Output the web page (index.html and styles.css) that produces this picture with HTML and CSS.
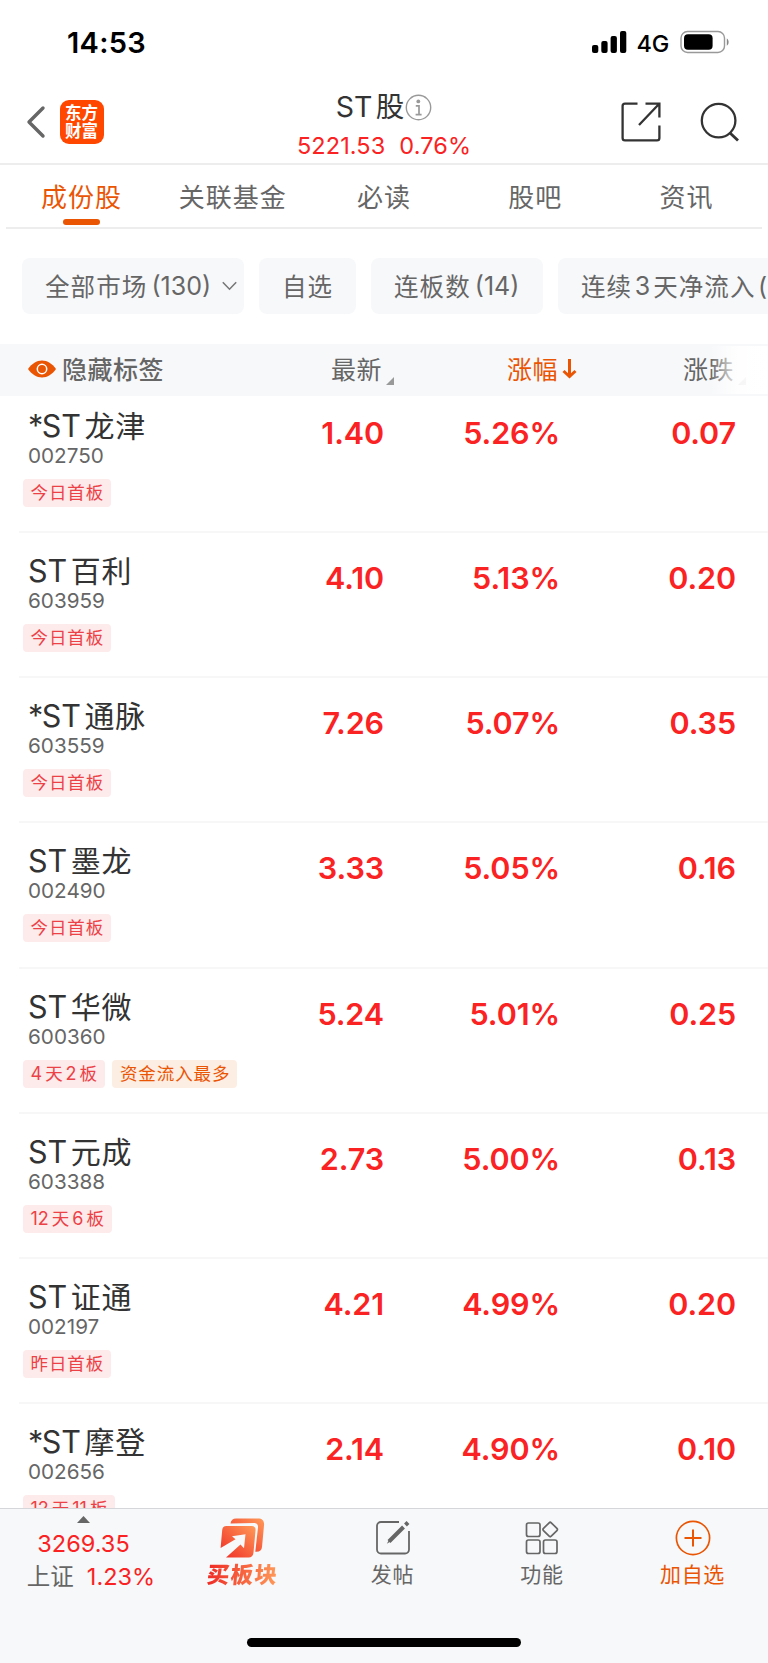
FILE: index.html
```html
<!DOCTYPE html>
<html lang="zh-CN">
<head>
    <meta charset="UTF-8">
    <meta name="viewport" content="width=device-width, initial-scale=1.0">
    <title>ST股</title>
    <link rel="stylesheet" href="styles.css">
</head>
<body>

<div class="screen">
    <div class="status-bar">
        <span class="time">14:53</span>
        <div class="status-icons">
            <svg width="35" height="22" viewBox="0 0 35 22">
                <rect x="0" y="14" width="6.3" height="8" rx="2"/>
                <rect x="9.3" y="10" width="6.3" height="12" rx="2"/>
                <rect x="18.6" y="5" width="6.3" height="17" rx="2"/>
                <rect x="28" y="0" width="6.3" height="22" rx="2"/>
            </svg>
            <span class="network">4G</span>
            <svg width="50" height="24" viewBox="0 0 50 24">
                <rect x="1" y="1.5" width="43.5" height="21" rx="6.5" fill="none" stroke="#999" stroke-width="1.4"/>
                <rect x="4" y="4.3" width="28.6" height="15.4" rx="4"/>
                <path d="M46.8 8.5c2.4 1.2 2.4 6 0 7.2z" fill="#888"/>
            </svg>
        </div>
    </div>

    <header class="nav">
        <div class="nav-left">
            <svg width="20" height="34" viewBox="0 0 20 34" fill="none" stroke="#666" stroke-width="3.4" stroke-linecap="round" stroke-linejoin="round">
                <path d="M17 3L3 17l14 14"/>
            </svg>
            <div class="logo"><span>东方</span><span>财富</span></div>
        </div>
        <div class="nav-title">
            <div class="title-row">
                <span class="title">ST<span class="cn">股</span></span>
                <svg width="27" height="27" viewBox="0 0 27 27">
                    <circle cx="13.5" cy="13.5" r="12.2" fill="none" stroke="#999" stroke-width="1.4"/>
                    <circle cx="13.3" cy="7.4" r="1.9" fill="#999"/>
                    <path d="M10.8 11.8h3.2v8.6M10.6 20.600h6" fill="none" stroke="#999" stroke-width="1.7"/>
                </svg>
            </div>
            <div class="quote"><span>5221.53</span><span>0.76%</span></div>
        </div>
        <div class="nav-right">
            <svg width="40" height="40" viewBox="0 0 40 40" fill="none" stroke="#333" stroke-width="2.3">
                <path d="M16.5 1.6H4a2.4 2.4 0 0 0-2.4 2.4v32a2.4 2.4 0 0 0 2.4 2.4h32a2.4 2.4 0 0 0 2.4-2.4V23.5M24.5 1.6h13.9v14M38 2L18 23"/>
            </svg>
            <svg width="40" height="40" viewBox="0 0 40 40" fill="none" stroke="#333" stroke-width="2.3">
                <circle cx="18.6" cy="18.6" r="16.8"/>
                <path d="M29.5 30.5l8.5 8" stroke-width="2.8"/>
            </svg>
        </div>
    </header>

    <nav class="tabs">
        <span class="tab active">成份股</span>
        <span class="tab">关联基金</span>
        <span class="tab">必读</span>
        <span class="tab">股吧</span>
        <span class="tab">资讯</span>
    </nav>

    <div class="filters">
        <div class="chip chip-market">全部市场<span class="en">(130)</span>
            <svg width="15" height="10" viewBox="0 0 15 10" fill="none" stroke="#777" stroke-width="1.6"><path d="M.8 1.2l6.7 7 6.7-7"/></svg>
        </div>
        <div class="chip chip-own">自选</div>
        <div class="chip chip-board">连板数<span class="en">(14)</span></div>
        <div class="chip chip-flow">连续<span class="en">3</span><span class="after">天净流入</span><span class="en">(</span></div>
    </div>

    <div class="table-head">
        <div class="col-name">
            <svg width="28" height="18" viewBox="0 0 28 18">
                <path d="M0 9C4 3.500 8.500 .5 14 .5S24 3.500 28 9c-4 5.500-8.500 8.500-14 8.500S4 14.500 0 9z" fill="#ea5504"/>
                <circle cx="14" cy="9" r="4.700" fill="none" stroke="#fff" stroke-width="1.500"/>
            </svg>
            <span>隐藏标签</span>
        </div>
        <div class="col-price"><span>最新</span><i class="corner"></i></div>
        <div class="col-pct"><span>涨幅</span><svg width="16" height="22" viewBox="0 0 16 22" fill="none" stroke="#ea5504" stroke-width="3"><path d="M7.500 1v17M1.500 13l6 5.500 6-5.500"/></svg></div>
        <div class="col-change"><span>涨跌</span><i class="corner"></i></div>
        <div class="head-fade"></div>
    </div>

    <main class="stock-list">
        <div class="stock">
            <div class="info">
                <div class="name"><span class="star">*</span>ST<span class="cn">龙津</span></div>
                <div class="code">002750</div>
                <div class="tags"><span class="tag">今日首板</span></div>
            </div>
            <div class="num price">1.40</div>
            <div class="num pct">5.26%</div>
            <div class="num change">0.07</div>
        </div>
        <div class="stock">
            <div class="info">
                <div class="name">ST<span class="cn">百利</span></div>
                <div class="code">603959</div>
                <div class="tags"><span class="tag">今日首板</span></div>
            </div>
            <div class="num price">4.10</div>
            <div class="num pct">5.13%</div>
            <div class="num change">0.20</div>
        </div>
        <div class="stock">
            <div class="info">
                <div class="name"><span class="star">*</span>ST<span class="cn">通脉</span></div>
                <div class="code">603559</div>
                <div class="tags"><span class="tag">今日首板</span></div>
            </div>
            <div class="num price">7.26</div>
            <div class="num pct">5.07%</div>
            <div class="num change">0.35</div>
        </div>
        <div class="stock">
            <div class="info">
                <div class="name">ST<span class="cn">墨龙</span></div>
                <div class="code">002490</div>
                <div class="tags"><span class="tag">今日首板</span></div>
            </div>
            <div class="num price">3.33</div>
            <div class="num pct">5.05%</div>
            <div class="num change">0.16</div>
        </div>
        <div class="stock">
            <div class="info">
                <div class="name">ST<span class="cn">华微</span></div>
                <div class="code">600360</div>
                <div class="tags"><span class="tag"><b>4</b>天<b class="mid">2</b>板</span><span class="tag orange">资金流入最多</span></div>
            </div>
            <div class="num price">5.24</div>
            <div class="num pct">5.01%</div>
            <div class="num change">0.25</div>
        </div>
        <div class="stock">
            <div class="info">
                <div class="name">ST<span class="cn">元成</span></div>
                <div class="code">603388</div>
                <div class="tags"><span class="tag"><b>12</b>天<b class="mid">6</b>板</span></div>
            </div>
            <div class="num price">2.73</div>
            <div class="num pct">5.00%</div>
            <div class="num change">0.13</div>
        </div>
        <div class="stock">
            <div class="info">
                <div class="name">ST<span class="cn">证通</span></div>
                <div class="code">002197</div>
                <div class="tags"><span class="tag">昨日首板</span></div>
            </div>
            <div class="num price">4.21</div>
            <div class="num pct">4.99%</div>
            <div class="num change">0.20</div>
        </div>
        <div class="stock">
            <div class="info">
                <div class="name"><span class="star">*</span>ST<span class="cn">摩登</span></div>
                <div class="code">002656</div>
                <div class="tags"><span class="tag"><b>12</b>天<b class="mid">11</b>板</span></div>
            </div>
            <div class="num price">2.14</div>
            <div class="num pct">4.90%</div>
            <div class="num change">0.10</div>
        </div>
    </main>

    <footer class="bottom-bar">
        <div class="actions">
            <div class="index">
                <i class="up"></i>
                <div class="index-value">3269.35</div>
                <div class="index-row"><span>上证</span><span class="index-pct">1.23%</span></div>
            </div>
            <div class="action">
                <svg width="46" height="40" viewBox="0 0 46 40">
                    <defs>
                        <linearGradient id="hot" x1="0" y1="1" x2="1" y2="0">
                            <stop offset="0" stop-color="#ef2b25"/>
                            <stop offset="1" stop-color="#ff9a58"/>
                        </linearGradient>
                    </defs>
                    <path d="M10.500 5.500C11 2 13 .5 16 .5h22c4.500 0 6.500 2.500 6 7l-2 21.500c-.3 3-2 4.800-5.500 4.800h-1.200L38 9.500c.3-3-1.200-4.500-4-4.500z" fill="url(#hot)"/>
                    <path d="M6.500 8h25c3 0 4.300 1.600 4 4.500l-2 22c-.3 3.200-2 5-5 5H6l14.500-13 3.500 3.800 1.500-14-13.500 2 3.500 3L.6 30 2.200 12c.3-2.700 1.600-4 4.300-4z" fill="url(#hot)"/>
                </svg>
                <span class="hot-label">买板块</span>
            </div>
            <div class="action">
                <svg width="36" height="36" viewBox="0 0 36 36" fill="none" stroke="#666" stroke-width="1.800">
                    <path d="M24 2H6a4 4 0 0 0-4 4v23.500a4 4 0 0 0 4 4h24a4 4 0 0 0 4-4V11"/>
                    <path d="M14 21.500L28.500 7" stroke-width="4"/><path d="M30.500 5l2.500-2.500" stroke-width="4"/><path d="M14.500 19l-2.700 4.700 4.700-2.700z" fill="#666" stroke="none"/>
                </svg>
                <span>发帖</span>
            </div>
            <div class="action">
                <svg width="36" height="36" viewBox="0 0 36 36" fill="none" stroke="#666" stroke-width="1.700">
                    <rect x="2.500" y="3" width="13.500" height="13.500" rx="2"/>
                    <rect x="2.500" y="20" width="13.500" height="13.500" rx="2"/>
                    <rect x="19.500" y="20" width="13.500" height="13.500" rx="2"/>
                    <rect x="20.700" y="4" width="11" height="11" rx="1.500" transform="rotate(45 26.200 9.500)"/>
                </svg>
                <span>功能</span>
            </div>
            <div class="action add">
                <svg width="36" height="36" viewBox="0 0 36 36" fill="none" stroke="#ea5504" stroke-width="2">
                    <circle cx="18" cy="18" r="16.600" stroke-width="1.700"/>
                    <path d="M18 9.500v17M9.500 18h17"/>
                </svg>
                <span>加自选</span>
            </div>
        </div>
        <div class="home-indicator"></div>
    </footer>
</div>

</body>
</html>
```
FILE: styles.css
```css
* {
    box-sizing: border-box;
}
body {
    margin: 0;
    background: #fff;
    font-family: Inter, "Noto Sans CJK SC", sans-serif;
    font-weight: 400;
    color: #666;
}
svg {
    display: block;
    flex: none;
}
.screen {
    width: 768px;
    height: 1663px;
    display: flex;
    flex-direction: column;
    overflow: hidden;
}

/* status bar */
.status-bar {
    height: 82px;
    flex: none;
    display: flex;
    justify-content: space-between;
    align-items: center;
    padding: 2px 38px 0 67px;
    color: #000;
}
.time {
    font-size: 29px;
    font-weight: 600;
    letter-spacing: 0.3px;
}
.status-icons {
    display: flex;
    align-items: center;
}
.network {
    font-size: 23.5px;
    font-weight: 500;
    margin: 2px 11px 0 10px;
    letter-spacing: -0.3px;
}

/* header */
.nav {
    height: 83px;
    flex: none;
    display: grid;
    grid-template-columns: 200px 1fr 200px;
    border-bottom: 2px solid #ededee;
}
.nav-left {
    display: flex;
    align-items: center;
    padding: 0 0 2px 26px;
}
.logo {
    width: 44px;
    height: 44px;
    margin-left: 13.5px;
    border-radius: 9px;
    background: #ff4700;
    color: #fff;
    display: flex;
    flex-direction: column;
    justify-content: center;
    align-items: center;
    font-size: 16.5px;
    font-weight: 700;
    line-height: 18px;
}
.nav-title {
    display: flex;
    flex-direction: column;
    align-items: center;
}
.title-row {
    display: flex;
    align-items: center;
    height: 44px;
    margin-top: 3px;
}
.title {
    font-size: 28.5px;
    line-height: 44px;
    color: #333;
}
.title .cn {
    margin: 0 1px 0 3.5px;
}
.quote {
    display: flex;
    gap: 14px;
    margin-top: 2px;
    font-size: 23.5px;
    line-height: 30px;
    letter-spacing: 0.1px;
    color: #fa2222;
}
.nav-right {
    display: flex;
    align-items: center;
    justify-content: flex-end;
    gap: 39px;
    padding: 0 28px 2px 0;
}

.tabs {
    height: 64px;
    flex: none;
    margin: 0 6px;
    display: grid;
    grid-template-columns: repeat(5, 1fr);
    border-bottom: 2px solid #ededee;
}
.tab {
    display: flex;
    flex-direction: column;
    align-items: center;
    font-size: 26px;
    letter-spacing: 1px;
    line-height: 65px;
}
.active {
    color: #ea5504;
}
.active::after {
    content: "";
    width: 37px;
    height: 6px;
    margin-top: -11px;
    border-radius: 3px;
    background: #ea5504;
}

/* filter chips */
.filters {
    flex: none;
    display: flex;
    gap: 15px;
    padding: 29px 0 30px 22px;
}
.chip {
    height: 56px;
    flex: none;
    display: flex;
    align-items: center;
    padding: 0 0 2px 23px;
    border-radius: 8px;
    background: #f7f8fa;
    font-size: 24.5px;
    letter-spacing: 1.1px;
    white-space: nowrap;
}
.chip .en {
    margin: 2px 0 0 4px;
    font-size: 25px;
    letter-spacing: 0;
}
.chip .after {
    margin-left: 3px;
}
.chip-flow .en {
    margin-left: 2.5px;
}
.chip svg {
    margin: 2px 0 0 11px;
}
.chip-market {
    width: 222px;
}
.chip-own {
    width: 97px;
}
.chip-board {
    width: 172px;
}
.chip-flow {
    width: 270px;
}

/* table */
.table-head {
    position: relative;
    height: 52px;
    flex: none;
    display: grid;
    grid-template-columns: 331px 176px 176px 1fr;
    align-items: center;
    background: #f7f8fa;
    font-size: 25px;
    letter-spacing: 0.5px;
}
.table-head > div {
    display: flex;
    align-items: center;
}
.table-head span {
    margin-bottom: 4px;
}
.table-head svg {
    margin-bottom: 2px;
}
.col-name {
    padding-left: 28px;
    font-weight: 500;
}
.col-name span {
    margin-left: 6px;
}
.col-pct svg {
    margin-left: 4px;
}
.col-pct {
    color: #ea5504;
}
.corner {
    width: 8px;
    height: 8px;
    margin: 22px 0 0 4px;
    background: #999;
    clip-path: polygon(100% 0, 100% 100%, 0 100%);
}
.head-fade {
    position: absolute;
    top: 2px;
    right: 0;
    bottom: 2px;
    width: 58px;
    background: linear-gradient(to right, rgba(255, 255, 255, 0), rgba(255, 255, 255, 0.9) 50%, #fff);
}
.stock-list {
    flex: 1;
    min-height: 0;
    overflow: hidden;
}
.stock {
    height: 145.17px;
    display: grid;
    grid-template-columns: 284px 100px 176px 176px;
    position: relative;
}
.stock:first-child {
    margin-top: -8px;
}
.stock::after {
    content: "";
    position: absolute;
    left: 19px;
    right: 0;
    bottom: 0;
    height: 2px;
    background: #f7f7f8;
}
.name {
    margin: 18px 0 0 28px;
    font-size: 30.5px;
    line-height: 40px;
    color: #333;
    white-space: nowrap;
}
.name .star {
    letter-spacing: -1.5px;
}
.name .cn {
    margin-left: 3.5px;
    font-size: 30px;
    letter-spacing: 0.7px;
}
.code {
    margin-left: 28px;
    font-size: 20.7px;
    line-height: 20px;
}
.tags {
    display: flex;
    gap: 7px;
    margin: 13px 0 0 22.5px;
}
.tag {
    height: 28px;
    padding: 0 7px 0 8px;
    border-radius: 4px;
    background: #fdebeb;
    color: #ec4146;
    font-size: 17.5px;
    line-height: 28px;
    letter-spacing: 0.9px;
    white-space: nowrap;
}
.tag b {
    font-weight: 400;
    font-size: 18px;
    letter-spacing: 0;
    margin-right: 3px;
}
.tag .mid {
    margin-left: 2px;
}
.orange {
    background: #fdeee4;
    color: #ea5504;
}
.num {
    margin-top: 25px;
    font-size: 30.5px;
    font-weight: 600;
    line-height: 40px;
    letter-spacing: -0.1px;
    text-align: right;
    color: #fa2222;
}

/* bottom bar */
.bottom-bar {
    height: 155px;
    flex: none;
    border-top: 1px solid #d5d6da;
    background: #f7f8fa;
}
.actions {
    display: grid;
    grid-template-columns: 167px 151px 149px 150px 151px;
    height: 129px;
}
.index {
    display: flex;
    flex-direction: column;
    align-items: center;
    font-size: 23.5px;
}
.up {
    width: 13px;
    height: 7px;
    margin-top: 7px;
    background: #666;
    clip-path: polygon(50% 0, 100% 100%, 0 100%);
}
.index-value {
    margin-top: 5px;
    line-height: 32px;
    color: #fa2222;
}
.index-row {
    display: flex;
    gap: 13px;
    padding-left: 15px;
    line-height: 33px;
}
.index-pct {
    color: #fa2222;
}
.action {
    display: flex;
    flex-direction: column;
    align-items: center;
    padding-top: 11px;
    font-size: 21px;
    line-height: 30px;
    letter-spacing: 0.7px;
}
.action svg {
    height: 36px;
    margin-bottom: 4px;
}
.action:nth-child(2) {
    padding-top: 9px;
}
.action:nth-child(2) svg {
    height: 40px;
    margin-bottom: 2px;
}
.hot-label {
    font-size: 22.5px;
    font-weight: 900;
    letter-spacing: 1.2px;
    transform: skewX(-5deg);
    background: linear-gradient(to right, #ef2b25, #ff9a58);
    -webkit-background-clip: text;
    background-clip: text;
    color: transparent;
}
.add {
    color: #ea5504;
}
.home-indicator {
    width: 274px;
    height: 9px;
    margin: 0 auto;
    border-radius: 5px;
    background: #000;
}
```
